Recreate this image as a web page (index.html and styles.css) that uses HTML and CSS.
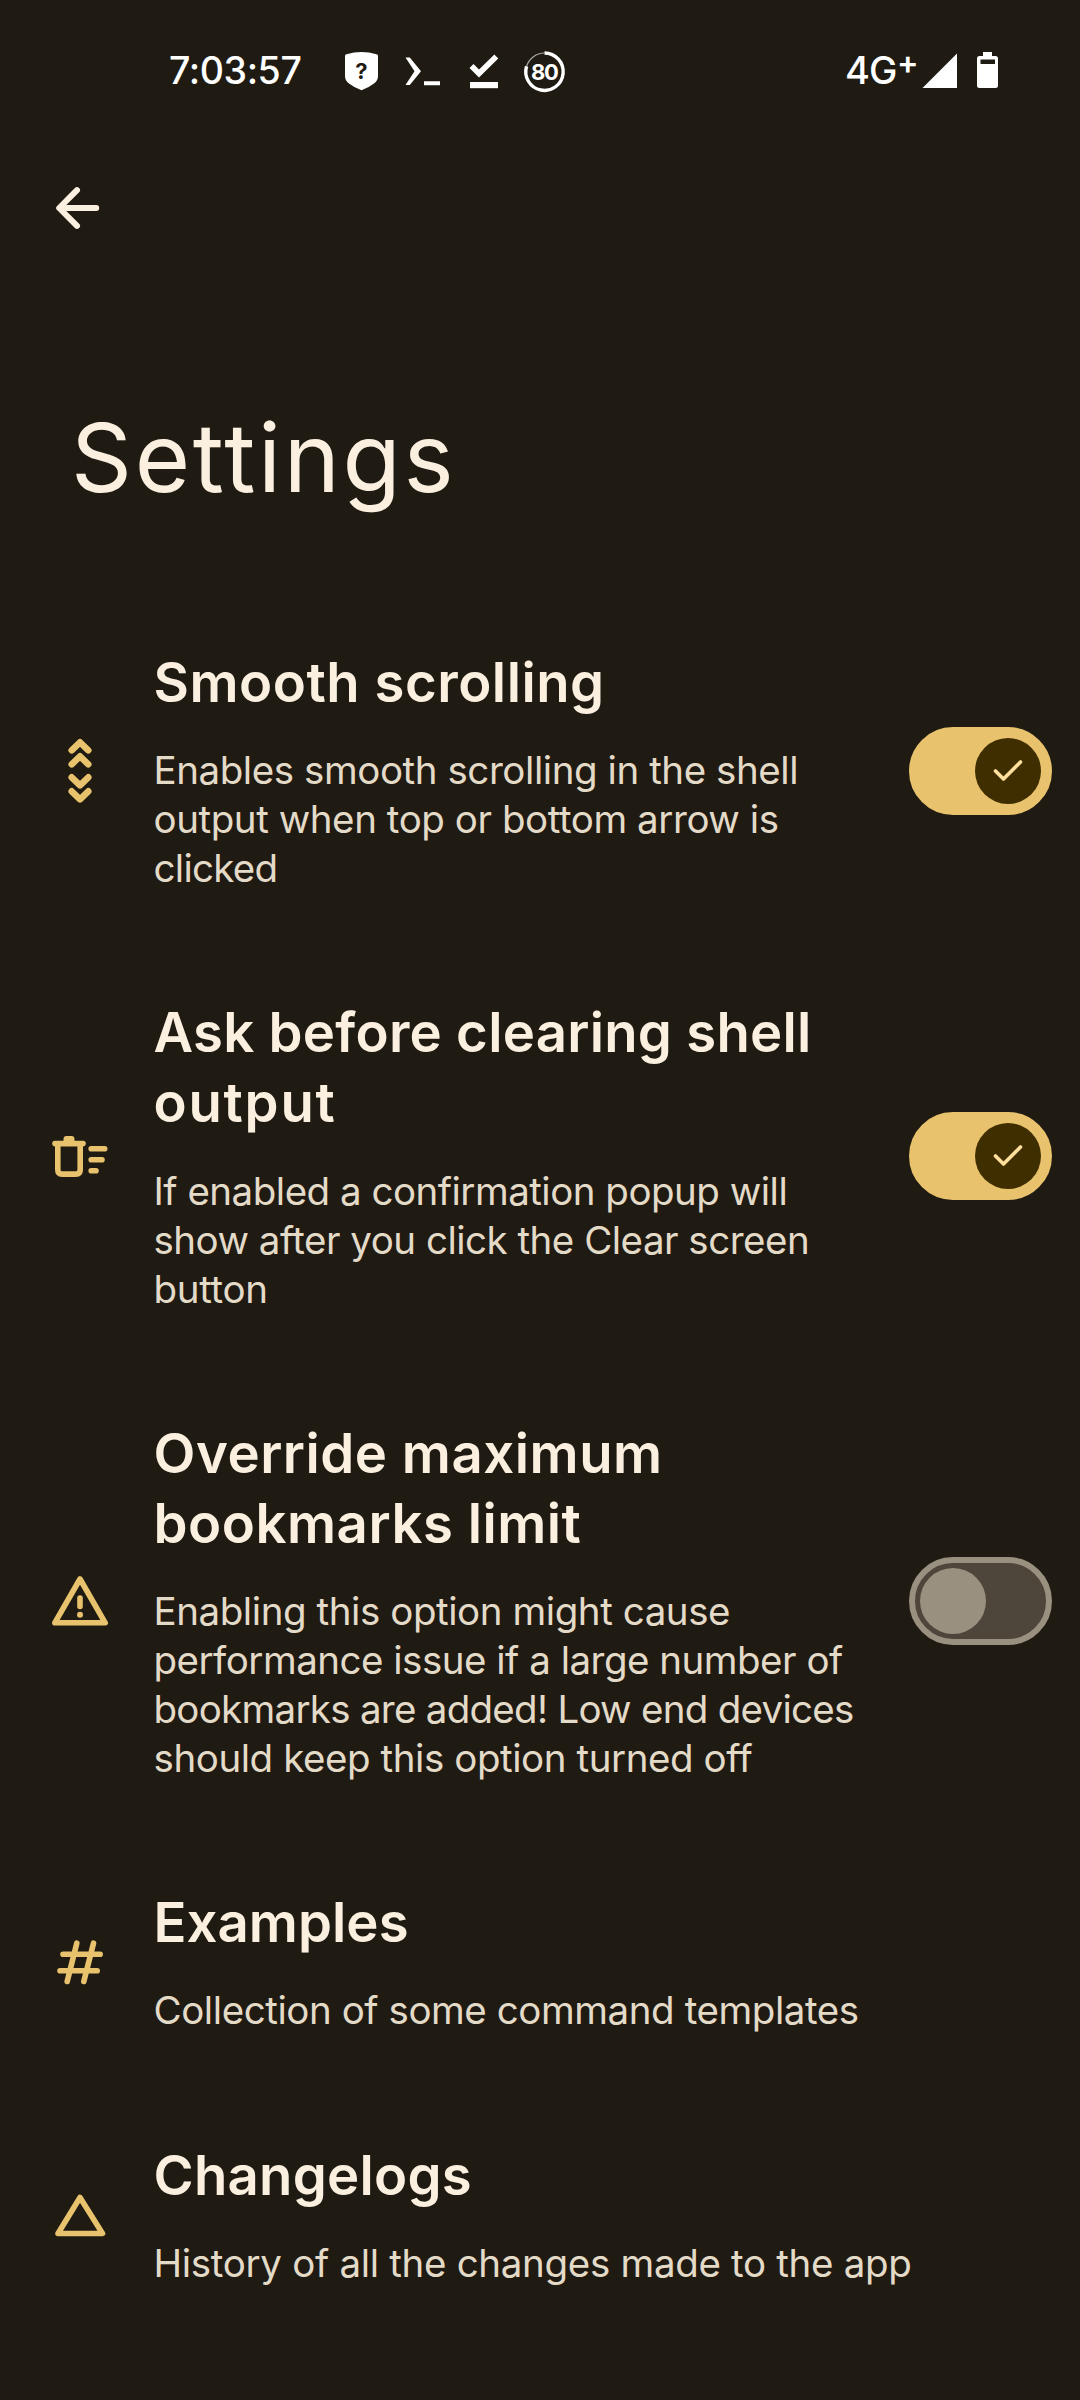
FILE: index.html
```
<!DOCTYPE html>
<html lang="en">
<head>
<meta charset="utf-8">
<title>Settings</title>
<link rel="stylesheet" href="styles.css">
</head>
<body>
<div class="screen">
  <div class="status">
    <span class="clock">7:03:57</span>
    <svg class="status-icons" width="240" height="46" viewBox="340 48 240 46">
      <path fill="#fff" d="M345 56q0-1.500 1.500-1.800Q354 52 361.500 52T376.500 54.200q1.500.3 1.500 1.800V76q0 5-4 7.500-5 4-12.500 6.800-7.500-2.800-12.500-6.800-4-2.500-4-7.500z"/>
      <text class="shield-mark" x="361.500" y="79" text-anchor="middle">?</text>
      <path fill="#fff" d="M405.500 57.500h4.300L421 71.300 409.800 85h-4.300L414.500 71.300zM424 81.200h16v4h-16z"/>
      <path fill="none" stroke="#fff" stroke-width="5.600" d="M471.500 66l7.500 7.500L496.300 56.500"/>
      <path fill="#fff" d="M470 82h28v6.200h-28z"/>
      <path fill="none" stroke="#fff" stroke-width="3.400" d="M544.500 53A18.700 18.700 0 1 1 526.600 66.200"/>
      <path fill="none" stroke="#aaa79f" stroke-width="1.200" d="M526.600 66.200A18.700 18.700 0 0 1 544.500 53"/>
      <text class="ring-mark" x="544.300" y="80" text-anchor="middle">80</text>
    </svg>
    <span class="network">4G</span><span class="plus">+</span>
    <svg class="signal" width="80" height="40" viewBox="920 50 80 40">
      <path fill="#fff" d="M922.500 88L957 53.500V88z"/>
      <path fill="#fff" fill-rule="evenodd" d="M983 52h9v4h3.500q2.500 0 2.500 2.500V85.500q0 2.500-2.500 2.500h-16q-2.500 0-2.500-2.500V58.500q0-2.500 2.500-2.500h3.500zM980.500 59.500v4.500h14.500v-4.500z"/>
    </svg>
  </div>

  <header>
    <svg class="back" width="66" height="66" viewBox="0 0 66 66"><path d="M30 15.200L12.200 33 30 50.800M13 33H49.200"/></svg>
    <h1>Settings</h1>
  </header>

  <main>
    <section class="row">
      <svg class="icon" viewBox="0 0 66 66"><path class="line wide" d="M24.700 12.300L33 4.300l8.300 8M24.700 26.300L33 18.300l8.300 8M24.700 39.300L33 47.300l8.300-8M24.700 53.300L33 61.300l8.300-8"/></svg>
      <div class="text">
        <h2><span class="t5">Smooth scrolling</span></h2>
        <p><span class="d4">Enables smooth scrolling in the shell</span><span class="d4">output when top or bottom arrow is</span><span class="d7">clicked</span></p>
      </div>
      <div class="switch on"><div class="thumb"><svg viewBox="0 0 66 66"><path d="M20.500 33l8 8 17-17"/></svg></div></div>
    </section>

    <section class="row">
      <svg class="icon" viewBox="0 0 66 66">
        <path class="line" d="M10.800 24V46.800q0 4.300 4.300 4.300H28.900q4.300 0 4.300-4.300V24"/>
        <path class="fill" d="M8 17.800H16.500V16q0-3 3-3h5q3 0 3 3v1.800H36a2.750 2.750 0 0 1 0 5.600H8a2.750 2.750 0 0 1 0-5.600z"/>
        <path class="line" d="M44.200 25.800H57.700M44.200 36.800H55M44.200 47.800H49"/>
      </svg>
      <div class="text">
        <h2><span class="t3">Ask before clearing shell</span><span class="t18">output</span></h2>
        <p><span class="d5">If enabled a confirmation popup will</span><span class="d5">show after you click the Clear screen</span><span class="d3">button</span></p>
      </div>
      <div class="switch on"><div class="thumb"><svg viewBox="0 0 66 66"><path d="M20.500 33l8 8 17-17"/></svg></div></div>
    </section>

    <section class="row">
      <svg class="icon" viewBox="0 0 66 66">
        <path class="line" d="M33 11L58.200 54.800H7.800z"/>
        <path class="line" d="M33 30v8.500"/><circle class="fill" cx="33" cy="46.800" r="3"/>
      </svg>
      <div class="text">
        <h2><span class="t5">Override maximum</span><span class="t5">bookmarks limit</span></h2>
        <p><span class="d4">Enabling this option might cause</span><span class="d5">performance issue if a large number of</span><span class="d7">bookmarks are added! Low end devices</span><span class="d4">should keep this option turned off</span></p>
      </div>
      <div class="switch"><div class="thumb"></div></div>
    </section>

    <section class="row">
      <svg class="icon" viewBox="0 0 66 66"><path class="line" d="M29.800 14.200L20.200 52.500M46.500 14.200L36.800 52.500M16 25.200H53.200M13 41.800H50.200"/></svg>
      <div class="text">
        <h2><span class="t0">Examples</span></h2>
        <p><span class="d4">Collection of some command templates</span></p>
      </div>
    </section>

    <section class="row">
      <svg class="icon" viewBox="0 0 66 66"><path class="line" d="M33 16.500L55.500 52.500H11z"/></svg>
      <div class="text">
        <h2><span class="t2">Changelogs</span></h2>
        <p><span class="d3">History of all the changes made to the app</span></p>
      </div>
    </section>
  </main>
</div>
</body>
</html>
```
FILE: styles.css
```
* { box-sizing: border-box; margin: 0; }

body {
  background: #1f1b13;
  color: #fbefdf;
  font-family: Inter, "Liberation Sans", sans-serif;
}

.screen { width: 1080px; height: 2400px; overflow: hidden; }
svg { display: block; flex: none; }

/* Status bar */
.status {
  display: flex;
  height: 140px;
  padding: 48px 80px 0 169px;
  color: #fff;
  font-weight: 500;
  white-space: nowrap;
}
.clock { width: 171px; font-size: 37.500px; line-height: 46px; letter-spacing: -.400px; }
.network { width: 52px; margin-left: 265px; font-size: 38px; line-height: 45px; letter-spacing: -.940px; }
.plus { width: 23px; font-size: 32px; font-weight: 600; line-height: 30px; }
.signal { margin-top: 2px; }
.shield-mark, .ring-mark { font-size: 22px; font-weight: 700; }
.shield-mark { fill: #1f1b13; }
.ring-mark { fill: #fff; letter-spacing: -1.200px; }

/* Header */
header { height: 508px; padding: 35px 47px 0; }
.back path { fill: none; stroke: #fbefdf; stroke-width: 6; stroke-linecap: round; stroke-linejoin: round; }
h1 {
  margin: 157px 0 0 24px;
  font-size: 95px;
  font-weight: 400;
  line-height: 120px;
  letter-spacing: 2.700px;
}

/* Preference list */
main { display: flex; flex-direction: column; gap: 105.200px; }
.row {
  display: grid;
  grid-template-columns: 66px 715px 143px;
  column-gap: 40.500px;
  align-items: center;
  padding-left: 47px;
}
.icon { width: 66px; height: 66px; }
.line { fill: none; stroke: #e8c26c; stroke-width: 5.600; stroke-linecap: round; stroke-linejoin: round; }
.wide { stroke-width: 6.500; }
.fill { fill: #e8c26c; }

.text span { display: block; white-space: nowrap; }
h2 { font-size: 54.500px; font-weight: 600; line-height: 69.800px; }
p { margin-top: 28.500px; color: #e4dac8; font-size: 38.500px; line-height: 49px; }

/* Tracking per line, titles then descriptions */
.t0 { letter-spacing: .050px; }
.t2 { letter-spacing: .260px; }
.t3 { letter-spacing: .270px; }
.t5 { letter-spacing: .520px; }
.t18 { letter-spacing: 1.770px; }
.d3 { letter-spacing: -.310px; }
.d4 { letter-spacing: -.430px; }
.d5 { letter-spacing: -.500px; }
.d7 { letter-spacing: -.720px; }

/* Switches */
.switch {
  width: 143px;
  height: 88px;
  padding: 5px;
  border: 6px solid #9a907f;
  border-radius: 44px;
  background: #4e463b;
}
.thumb { width: 66px; height: 66px; border-radius: 50%; background: #9a907f; }
.on { background: #e8c26c; border-color: #e8c26c; }
.on .thumb { margin-left: auto; background: #3f2e00; }
.thumb path { fill: none; stroke: #ffdf9e; stroke-width: 3.600; stroke-linecap: round; stroke-linejoin: round; }
```
